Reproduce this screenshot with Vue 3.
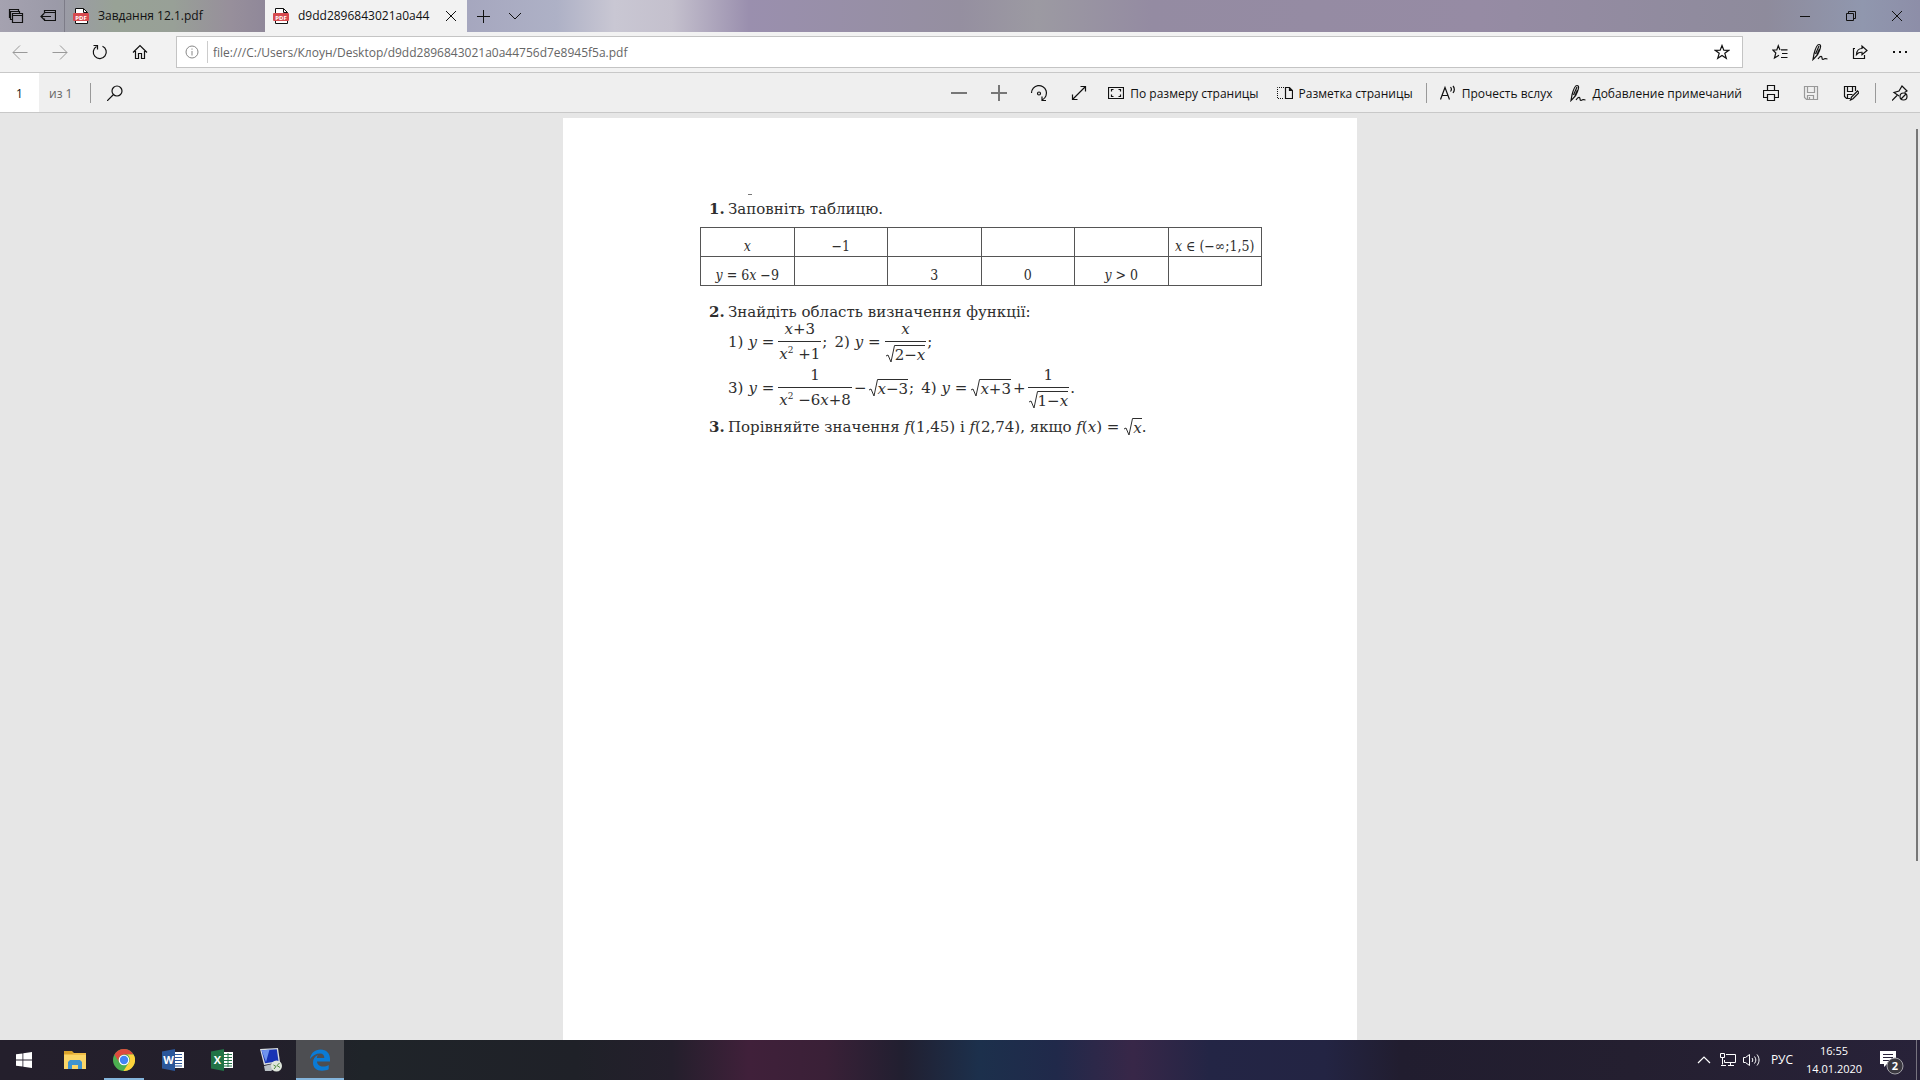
<script setup>
import { ref } from 'vue'

const address = ref('file:///C:/Users/Клоун/Desktop/d9dd2896843021a0a44756d7e8945f5a.pdf')
const page = ref('1')

const tabs = [
  { title: 'Завдання 12.1.pdf', active: false },
  { title: 'd9dd2896843021a0a44', active: true }
]
</script>

<template>
  <div class="screen">
    <header class="titlebar">
      <button class="tool narrow" aria-label="Отложенные вкладки">
        <svg width="16" height="16" viewBox="0 0 16 16">
          <path class="bold" d="M4.5 11.5h-2v-3M2.500 9.500h-1v-8h9v2M2.500 9.500v-6h9v2M4.500 5.500h10v9h-10zM4.500 7.500h10" />
        </svg>
      </button>
      <button class="tool narrow" aria-label="Отложить вкладки">
        <svg width="16" height="16" viewBox="0 0 16 16">
          <path class="bold" d="M4.500 5.500v-3h11v10h-11v-2M4.500 4.500h11M11 8.500H1M4 5.500l-3 3 3 3" />
        </svg>
      </button>

      <nav class="tabs">
        <div
          v-for="tab in tabs"
          :key="tab.title"
          class="tab"
          :class="{ active: tab.active }"
        >
          <button class="tab-label">
            <svg width="16" height="18" viewBox="0 0 16 18">
              <path class="sheet" d="M2.500 1.500h8l4 4v11h-12z" />
              <path d="M10.500 1.500v4h4" />
              <rect class="badge" x="0" y="6" width="16" height="8" rx="1" />
              <text x="8" y="12.500" text-anchor="middle">PDF</text>
            </svg>
            <span>{{ tab.title }}</span>
          </button>
          <button v-if="tab.active" class="tab-close" aria-label="Закрыть вкладку">
            <svg width="10" height="10" viewBox="0 0 10 10"><path d="M0 0l10 10M10 0L0 10" /></svg>
          </button>
        </div>
      </nav>

      <button class="tool narrow" aria-label="Новая вкладка">
        <svg width="14" height="14" viewBox="0 0 14 14"><path d="M7.500 1v13M1 7.500h13" /></svg>
      </button>
      <button class="tool narrow" aria-label="Показать эскизы">
        <svg width="14" height="14" viewBox="0 0 14 14"><path d="M1 4l6 6 6-6" /></svg>
      </button>

      <div class="window-buttons">
        <button aria-label="Свернуть">
          <svg width="10" height="10" viewBox="0 0 10 10"><path d="M0 5.500h10" /></svg>
        </button>
        <button aria-label="Восстановить">
          <svg width="10" height="10" viewBox="0 0 10 10">
            <path d="M.5 2.500h7v7h-7zM2.500 2v-1.500h7v7H8" />
          </svg>
        </button>
        <button aria-label="Закрыть">
          <svg width="10" height="10" viewBox="0 0 10 10"><path d="M0 0l10 10M10 0L0 10" /></svg>
        </button>
      </div>
    </header>

    <div class="addressbar">
      <button class="tool muted" aria-label="Назад">
        <svg width="16" height="16" viewBox="0 0 16 16"><path d="M15.500 8.500H1M8 1.500l-7 7 7 7" /></svg>
      </button>
      <button class="tool muted" aria-label="Вперёд">
        <svg width="16" height="16" viewBox="0 0 16 16"><path d="M.5 8.500H15M8 1.500l7 7-7 7" /></svg>
      </button>
      <button class="tool" aria-label="Обновить">
        <svg width="16" height="16" viewBox="0 0 16 16">
          <path class="bold" d="M10.500 2.200a6.500 6.500 0 1 1-6 .3M1.500 1.500h4v4" />
        </svg>
      </button>
      <button class="tool" aria-label="Домой">
        <svg width="16" height="16" viewBox="0 0 16 16">
          <path class="bold" d="M1 8.500l7-7 7 7M3.500 7v7.500h3v-5h3v5h3V7" />
        </svg>
      </button>

      <div class="address">
        <button class="info" aria-label="Сведения о сайте">
          <svg width="14" height="14" viewBox="0 0 14 14">
            <circle cx="7" cy="7" r="6" /><path d="M7 6v4.500M7 3.500v1.200" />
          </svg>
        </button>
        <input v-model="address" type="text" aria-label="Адрес" spellcheck="false">
        <button class="favorite" aria-label="В избранное">
          <svg width="16" height="16" viewBox="0 0 16 16">
            <path class="bold" d="M8 1.500l1.800 4.700 5 .1-4 3 1.500 5L8 11.500l-4.300 2.800 1.500-5-4-3 5-.1z" />
          </svg>
        </button>
      </div>

      <button class="tool" aria-label="Избранное">
        <svg width="16" height="16" viewBox="0 0 16 16">
          <path class="bold" d="M9 5.800h6.500M10 9.500h5.500M9 13.500h6.500M8 6L6.300 1.800 4.800 6H.8l3 3-1.300 5L7 11.200" />
        </svg>
      </button>
      <button class="tool" aria-label="Заметки">
        <svg width="16" height="18" viewBox="0 0 16 18">
          <path class="bold" d="M1 16.500L2 11C3 7 4.500 1.500 7 1.500s1.500 3.500.5 6C6.500 10.500 5 13 3 14.500zM3.500 11L7 3M5 11.500L7.500 6M6 16c2.500-3.500 4-3 4-1s1.500 1.500 2.500.8 1.800 0 3 .2" />
        </svg>
      </button>
      <button class="tool" aria-label="Поделиться">
        <svg width="16" height="16" viewBox="0 0 16 16">
          <path class="bold" d="M3 4.500H1.500v10h11V11M4.500 10.500c.3-4 2.500-6 5.500-6V2l5 4.500-5 4.300V8.300c-2.500-.2-4 .5-5.500 2.200z" />
        </svg>
      </button>
      <button class="tool" aria-label="Параметры">
        <svg width="16" height="16" viewBox="0 0 16 16">
          <path class="solid" d="M1 7h2v2H1zM7 7h2v2H7zM13 7h2v2h-2z" />
        </svg>
      </button>
    </div>

    <div class="pdfbar">
      <input v-model="page" class="page-number" type="text" aria-label="Номер страницы">
      <span class="page-total">из 1</span>
      <i class="divider"></i>
      <button class="tool search" aria-label="Найти">
        <svg width="16" height="16" viewBox="0 0 16 16">
          <circle class="bold" cx="10" cy="6" r="5" /><path class="bold" d="M6.500 9.500L0 16" />
        </svg>
      </button>

      <div class="pdf-tools">
        <button class="tool grey" aria-label="Уменьшить">
          <svg width="16" height="16" viewBox="0 0 16 16"><path class="thick" d="M0 8h16" /></svg>
        </button>
        <button class="tool grey" aria-label="Увеличить">
          <svg width="16" height="16" viewBox="0 0 16 16"><path class="thick" d="M0 8h16M8 0v16" /></svg>
        </button>
        <button class="tool" aria-label="Повернуть">
          <svg width="18" height="18" viewBox="0 0 18 18">
            <path class="bold" d="M1.500 9a7.500 7.500 0 1 1 11 6.700M16 16.500h-4v-4" />
            <circle class="bold" cx="9" cy="9.500" r="1.500" />
          </svg>
        </button>
        <button class="tool" aria-label="Во весь экран">
          <svg width="16" height="16" viewBox="0 0 16 16">
            <path class="bold" d="M1.500 14.500l13-13M9.500 1.500h5v5M1.500 9.500v5h5" />
          </svg>
        </button>
        <button class="labelled">
          <svg width="16" height="14" viewBox="0 0 16 14">
            <path class="bold" d="M.5 1.500h15v11H.5zM5.500 3.500h-2v2M10.500 3.500h2v2M5.500 10.500h-2v-2M10.500 10.500h2v-2" />
          </svg>
          <span>По размеру страницы</span>
        </button>
        <button class="labelled">
          <svg width="16" height="14" viewBox="0 0 16 14">
            <path class="dotted" d="M7 1.500H.5v11H7" />
            <path class="bold" d="M8.500 1.500h4l3 3v8h-7zM12.500 1.500v3h3" />
          </svg>
          <span>Разметка страницы</span>
        </button>
        <i class="divider"></i>
        <button class="labelled">
          <svg width="16" height="16" viewBox="0 0 16 16">
            <path class="bold" d="M.5 14.500L5 2.500l4.500 12M2 10.500h6M10.500 2c1.200 1.500 1.200 3 0 4.500M13 1c1.800 2.200 1.800 4.500 0 7" />
          </svg>
          <span>Прочесть вслух</span>
        </button>
        <button class="labelled">
          <svg width="16" height="18" viewBox="0 0 16 18">
            <path class="bold" d="M1 16.500L2 11C3 7 4.500 1.500 7 1.500s1.500 3.500.5 6C6.500 10.500 5 13 3 14.500zM3.500 11L7 3M5 11.500L7.500 6M6 16c2.500-3.500 4-3 4-1s1.500 1.500 2.500.8 1.800 0 3 .2" />
          </svg>
          <span>Добавление примечаний</span>
        </button>
        <button class="tool" aria-label="Печать">
          <svg width="16" height="16" viewBox="0 0 16 16">
            <path class="bold" d="M4.500 5.500v-5h7v5M4.500 12.500h-4v-7h15v7h-4M4.500 9.500h7v6h-7z" />
          </svg>
        </button>
        <button class="tool muted" aria-label="Сохранить" disabled>
          <svg width="16" height="16" viewBox="0 0 16 16">
            <path class="bold" d="M1.500 1.500h13v13h-11l-2-2zM4.500 1.500v6h7v-6M4.500 14.500v-4h6v4M6.500 12v2" />
          </svg>
        </button>
        <button class="tool" aria-label="Сохранить как">
          <svg width="16" height="16" viewBox="0 0 16 16">
            <path class="bold" d="M7 13.500H3.500l-2-2v-10h11V6M4.500 1.500v5h5v-5M4.500 13.500v-4h5M7.500 15l1-3 6-6 1.500 1.700-6 6z" />
          </svg>
        </button>
        <i class="divider"></i>
        <button class="tool" aria-label="Закрепить панель">
          <svg width="16" height="16" viewBox="0 0 16 16">
            <path class="bold" d="M0 15.500l5-5M7 11L2 7.500l5-1.500 3-5 5 5-2.500 1.500" />
            <circle class="bold" cx="11.500" cy="11.500" r="3.500" /><path class="bold" d="M9 14l5-5" />
          </svg>
        </button>
      </div>
    </div>

    <main class="viewer">
      <article class="sheet-page">
        <span class="speck"></span>
        <p class="task"><b>1.</b>Заповніть таблицю.</p>

        <table>
          <tbody>
            <tr>
              <td><em>x</em></td>
              <td>−1</td>
              <td></td>
              <td></td>
              <td></td>
              <td><em>x</em> ∈ (−∞;1,5)</td>
            </tr>
            <tr>
              <td><em>y</em> = 6<em>x</em> −9</td>
              <td></td>
              <td>3</td>
              <td>0</td>
              <td><em>y</em> &gt; 0</td>
              <td></td>
            </tr>
          </tbody>
        </table>

        <p class="task"><b>2.</b>Знайдіть область визначення функції:</p>
        <div class="formulas">
          <span class="index">1)</span>
          <span class="left"><em>y</em> =</span>
          <span class="frac">
            <span><em>x</em>+3</span>
            <span><em>x</em><sup>2</sup> +1</span>
          </span>
          <span class="stop">;</span>
          <span class="index">2)</span>
          <span class="left"><em>y</em> =</span>
          <span class="frac">
            <span><em>x</em></span>
            <span class="root">
              <svg width="9" height="18" viewBox="0 0 9 18"><path d="M0 11l2-1 3 7L8.500.5H9" /></svg>
              <span>2−<em>x</em></span>
            </span>
          </span>
          <span class="stop">;</span>
        </div>
        <div class="formulas">
          <span class="index">3)</span>
          <span class="left"><em>y</em> =</span>
          <span class="frac">
            <span>1</span>
            <span><em>x</em><sup>2</sup> −6<em>x</em>+8</span>
          </span>
          <span class="sign">−</span>
          <span class="root">
            <svg width="9" height="18" viewBox="0 0 9 18"><path d="M0 11l2-1 3 7L8.500.5H9" /></svg>
            <span><em>x</em>−3</span>
          </span>
          <span class="stop">;</span>
          <span class="index">4)</span>
          <span class="left"><em>y</em> =</span>
          <span class="root">
            <svg width="9" height="18" viewBox="0 0 9 18"><path d="M0 11l2-1 3 7L8.500.5H9" /></svg>
            <span><em>x</em>+3</span>
          </span>
          <span class="sign">+</span>
          <span class="frac">
            <span>1</span>
            <span class="root">
              <svg width="9" height="18" viewBox="0 0 9 18"><path d="M0 11l2-1 3 7L8.500.5H9" /></svg>
              <span>1−<em>x</em></span>
            </span>
          </span>
          <span class="stop">.</span>
        </div>
        <p class="task compare">
          <b>3.</b>Порівняйте значення <em>f</em>(1,45) і <em>f</em>(2,74), якщо <em>f</em>(<em>x</em>) =
          <span class="root">
            <svg width="9" height="18" viewBox="0 0 9 18"><path d="M0 11l2-1 3 7L8.500.5H9" /></svg>
            <span><em>x</em></span>
          </span>.
        </p>
      </article>
      <div class="scroll-thumb"></div>
    </main>

    <footer class="taskbar">
      <button class="app start" aria-label="Пуск">
        <svg width="16" height="16" viewBox="0 0 16 16">
          <path class="white" d="M0 2.300L6.500 1.400v6.200H0zM7.300 1.300L16 0v7.600H7.300zM0 8.400h6.500v6.200L0 13.700zM7.300 8.400H16V16l-8.700-1.300z" />
        </svg>
      </button>
      <button class="app" aria-label="Проводник">
        <svg width="22" height="20" viewBox="0 0 22 20">
          <path fill="#d9a32b" d="M0 1h8l2 2h11v5H0z" />
          <path fill="#fbd667" d="M0 4h22v15H0z" />
          <path fill="#f0bd46" d="M0 4h8l2-1h12v2H0z" />
          <path fill="#3f93cf" d="M4 19v-7l2-2h10l2 2v7h-4v-4H8v4z" />
        </svg>
      </button>
      <button class="app running" aria-label="Google Chrome">
        <svg width="22" height="22" viewBox="0 0 22 22">
          <circle cx="11" cy="11" r="11" fill="#4caf50" />
          <path fill="#dd4b3e" d="M1.500 5.500a11 11 0 0 1 19 0H11a5.500 5.500 0 0 0-5 7.700z" />
          <path fill="#fdd23b" d="M20.500 5.500A11 11 0 0 1 10.500 22l5-8a5.500 5.500 0 0 0-1.500-8.500z" />
          <circle cx="11" cy="11" r="5.300" fill="#fff" />
          <circle cx="11" cy="11" r="4.200" fill="#4285f4" />
        </svg>
      </button>
      <button class="app" aria-label="Word">
        <svg width="22" height="22" viewBox="0 0 22 22">
          <path fill="#fff" d="M11 3h11v16H11z" />
          <path stroke="#2b579a" d="M13 5.500h7M13 8.500h7M13 11.500h7M13 14.500h7M13 17h7" />
          <path fill="#2b579a" d="M0 2.500L13 0v22L0 19.500z" />
          <text x="6.500" y="15" text-anchor="middle">W</text>
        </svg>
      </button>
      <button class="app" aria-label="Excel">
        <svg width="22" height="22" viewBox="0 0 22 22">
          <path fill="#fff" d="M11 3h11v16H11z" />
          <path stroke="#217346" d="M13 5.500h8M13 8.500h8M13 11.500h8M13 14.500h8M13 17h8M17 4v14" />
          <path fill="#217346" d="M0 2.500L13 0v22L0 19.500z" />
          <text x="6.500" y="15" text-anchor="middle">X</text>
        </svg>
      </button>
      <button class="app" aria-label="Удалённый рабочий стол">
        <svg width="24" height="24" viewBox="0 0 24 24">
          <path fill="#b8bfc4" d="M5 18l8-2 5 3-6 4H6z" />
          <path fill="#d8dde2" d="M1 1l18-1 2 14-16 3z" />
          <path fill="#1733b5" d="M2.500 2.200l15.300-1 1.700 12L6 15.300z" />
          <path fill="#6f93ee" d="M2.500 2.200l8-.5L7 14z" />
          <circle cx="17.500" cy="18" r="5.500" fill="#dfe6dc" />
          <path stroke="#4c8a3a" d="M14.500 17l2.500 1.500-2 2.500M20.500 15l-2.500 2.500 3 2" />
        </svg>
      </button>
      <button class="app running current" aria-label="Microsoft Edge">
        <svg width="22" height="22" viewBox="0 0 22 22">
          <path fill="#0a7bd6" d="M1 10C1.800 4 6 .5 11.500.5 17.500.5 21 4.500 21 10v2.500H8c.2 3.500 3 5 6 5 2.200 0 4-.5 5.700-1.500v4.300c-2 1-4.200 1.400-6.700 1.400-5.700 0-9-3.200-9-8 0-3.500 1.700-6.200 5-7.700-.8 1-1.100 1.900-1.200 3h7.500c0-3-1.300-4.500-4.300-4.500-4 0-7.500 2-10 5.500z" />
        </svg>
      </button>

      <div class="tray">
        <button aria-label="Скрытые значки">
          <svg width="14" height="14" viewBox="0 0 14 14"><path class="bold" d="M1 10l6-6 6 6" /></svg>
        </button>
        <button aria-label="Сеть">
          <svg width="16" height="16" viewBox="0 0 16 16">
            <path d="M6 2.500h9.500v8h-11V8M8 13.500h6M10.500 10.500v3M.5 1.500h4v4h-4zM2.500 5.500v7M1 13.500h5" />
          </svg>
        </button>
        <button aria-label="Громкость">
          <svg width="18" height="16" viewBox="0 0 18 16">
            <path d="M.5 5.500h2l4-3v11l-4-3h-2zM9 6c1 1.300 1 2.700 0 4M11.500 4.500c1.800 2.300 1.800 4.700 0 7M14 2.500c2.700 3.500 2.700 7.500 0 11" />
          </svg>
        </button>
        <button class="language">РУС</button>
        <button class="clock"><span>16:55</span><span>14.01.2020</span></button>
        <button class="notifications" aria-label="Уведомления">
          <svg width="26" height="26" viewBox="0 0 26 26">
            <path class="white" d="M1 2h16v13H8l-3 3v-3H1z" />
            <path stroke="#28223a" d="M4 5.500h10M4 8.500h10M4 11.500h7" />
            <circle cx="16" cy="17" r="8" fill="#3a3840" stroke="#a3a1a8" />
            <text x="16" y="21" text-anchor="middle">2</text>
          </svg>
        </button>
        <button class="show-desktop" aria-label="Показать рабочий стол"></button>
      </div>
    </footer>
  </div>
</template>

<style>
body {
  margin: 0;
  overflow: hidden;
}
</style>

<style scoped>
.screen {
  display: flex;
  flex-direction: column;
  height: 100vh;
  background: #e6e6e6;
  font: 12px/16px "Open Sans", "Noto Sans", sans-serif;
  color: #111;
}

.screen * {
  box-sizing: border-box;
}

button,
input {
  margin: 0;
  padding: 0;
  border: 0;
  border-radius: 0;
  background: transparent;
  color: inherit;
  font: inherit;
  outline: 0;
}

button {
  display: flex;
  align-items: center;
  justify-content: center;
  flex: none;
  white-space: nowrap;
}

svg {
  display: block;
  flex: none;
  fill: none;
  stroke: currentColor;
  stroke-width: 1;
}

.bold {
  stroke-width: 1.2;
}

.thick {
  stroke-width: 2;
}

.dotted {
  stroke-dasharray: 1 1;
}

.solid {
  fill: currentColor;
  stroke: none;
}

.tool {
  width: 40px;
  height: 100%;
}

.tool.narrow {
  width: 32px;
}

.muted {
  color: #999;
}

.grey {
  color: #777;
}

.divider {
  flex: none;
  width: 1px;
  height: 20px;
  background: #999;
}

/* Title bar */

.titlebar {
  display: flex;
  flex: none;
  height: 32px;
  background: linear-gradient(
    90deg,
    #a5a2b0 0,
    #9b9aa8 3%,
    #98a296 6%,
    #98a097 9%,
    #978f9b 12%,
    #8f8799 14%,
    #a5a6be 24%,
    #aeb1c6 29%,
    #c9c7d3 32%,
    #c4c0cd 35%,
    #9a8fae 39%,
    #958fa0 50%,
    #9c9aa2 54%,
    #948ba2 60%,
    #968ba4 77%,
    #8e8b9c 92%,
    #9097ae 97%,
    #8d8ea8 100%
  );
}

.tabs {
  display: flex;
}

.tab {
  display: flex;
  width: 201px;
  border-left: 1px solid #7d7c88;
}

.tab.active {
  width: 202px;
  border: 0;
  background: #f2f2f2;
}

.tab-label {
  flex: 1;
  justify-content: flex-start;
  gap: 9px;
  padding-left: 8px;
}

.tab-label .sheet {
  fill: #fff;
}

.tab-label .badge {
  fill: #d64b4f;
  stroke: none;
}

.tab-label text {
  fill: #fff;
  stroke: none;
  font: bold 6px "Open Sans", sans-serif;
}

.tab-close {
  width: 32px;
}

.window-buttons {
  display: flex;
  margin-left: auto;
}

.window-buttons button {
  width: 46px;
}

/* Address row */

.addressbar {
  display: flex;
  align-items: center;
  flex: none;
  height: 41px;
  border-bottom: 1px solid #c8c8c8;
  background: #f2f2f2;
}

.address {
  display: flex;
  flex: 1;
  height: 32px;
  margin: 0 17px 0 16px;
  border: 1px solid #c4c4c4;
  background: #fff;
}

.info {
  width: 31px;
  margin: 4px 0;
  border-right: 1px solid #ccc;
  color: #888;
}

.address input {
  flex: 1;
  min-width: 0;
  padding: 2px 0 0 5px;
  color: #666;
}

.favorite {
  width: 40px;
}

/* PDF toolbar */

.pdfbar {
  display: flex;
  align-items: center;
  flex: none;
  height: 40px;
  border-bottom: 1px solid #c8c8c8;
  background: #efefef;
}

.page-number {
  width: 39px;
  height: 100%;
  padding-top: 2px;
  background: #fff;
  text-align: center;
}

.page-total {
  width: 51px;
  padding: 2px 0 0 10px;
  color: #666;
}

.search {
  margin-left: 4px;
}

.pdf-tools {
  display: flex;
  align-items: center;
  height: 100%;
  margin-left: auto;
}

.pdf-tools .divider {
  margin: 0 4px;
}

.labelled {
  gap: 6px;
  height: 100%;
  padding: 0 9px;
}

.labelled span {
  padding-top: 2px;
}

/* Document */

.viewer {
  position: relative;
  display: flex;
  justify-content: center;
  flex: 1;
  min-height: 0;
  padding-top: 5px;
}

.scroll-thumb {
  position: absolute;
  top: 16px;
  right: 2px;
  width: 2px;
  height: 79%;
  background: #777;
}

.sheet-page {
  width: 794px;
  padding: 76px 95px 0 137px;
  background: #fff;
  color: #2e2e2e;
  font: 15px/18px "DejaVu Serif", serif;
}

.speck {
  display: block;
  width: 4px;
  height: 1px;
  margin-left: 48px;
  background: #777;
}

.task {
  display: flex;
  margin: 5px 0 0 9px;
  white-space: pre;
}

.task b {
  width: 19px;
}

table {
  width: 562px;
  margin: 9px 0 17px;
  border-collapse: collapse;
  table-layout: fixed;
  font: 14px/18px "DejaVu Serif Condensed", "DejaVu Serif", serif;
}

td {
  height: 29px;
  padding: 8px 0 0;
  border: 1px solid #555;
  text-align: center;
  white-space: nowrap;
}

.formulas {
  display: flex;
  align-items: center;
  height: 46px;
  padding-left: 28px;
}

.task + .formulas {
  margin-top: -2px;
}

.index {
  margin-right: 5px;
}

.left {
  margin-right: 4px;
}

.frac {
  display: flex;
  flex-direction: column;
  align-items: center;
}

.frac > span {
  height: 22px;
  padding: 3px 1px 0;
}

.frac > span:first-child {
  align-self: stretch;
  padding-top: 0;
  border-bottom: 1px solid #2e2e2e;
  text-align: center;
}

.stop {
  margin: 0 7px 0 1px;
}

.sign {
  margin: 0 2px;
}

sup {
  font-size: 9px;
  line-height: 1px;
}

.root {
  display: inline-flex;
}

.root > span {
  height: 18px;
  border-top: 1px solid #2e2e2e;
}

.compare {
  margin-top: 7px;
}

/* Taskbar */

.taskbar {
  display: flex;
  gap: 1px;
  flex: none;
  height: 40px;
  background: linear-gradient(
    90deg,
    #241f2c 0,
    #231f2b 14%,
    #1f2429 19%,
    #1f2128 30%,
    #241f2c 35%,
    #40203a 39%,
    #3a2037 43%,
    #211f30 47%,
    #1c304c 51%,
    #20294a 55%,
    #382748 59%,
    #232545 63%,
    #232443 69%,
    #211d2f 73%,
    #241f30 85%,
    #282239 100%
  );
  color: #fff;
}

.app {
  width: 48px;
}

.start {
  margin-right: 2px;
}

.app svg {
  stroke: none;
}

.app text {
  fill: #fff;
  font: bold 11px "Open Sans", sans-serif;
}

.white {
  fill: #fff;
  stroke: none;
}

.running {
  background: linear-gradient(#84b5dc, #84b5dc) center bottom / 40px 2px no-repeat;
}

.current {
  background-color: #4d4e52;
  background-size: 48px 2px;
}

.tray {
  display: flex;
  margin-left: auto;
}

.tray > button {
  width: 24px;
}

.tray > .language {
  width: 36px;
}

.tray > .clock {
  flex-direction: column;
  width: 66px;
  margin-left: 1px;
  font-size: 11px;
  line-height: 18px;
}

.tray > .notifications {
  width: 49px;
  padding: 4px 0 0;
}

.notifications text {
  fill: #fff;
  stroke: none;
  font: bold 11px "Open Sans", sans-serif;
}

.tray > .show-desktop {
  width: 4px;
  border-left: 1px solid #77737f;
}
</style>
